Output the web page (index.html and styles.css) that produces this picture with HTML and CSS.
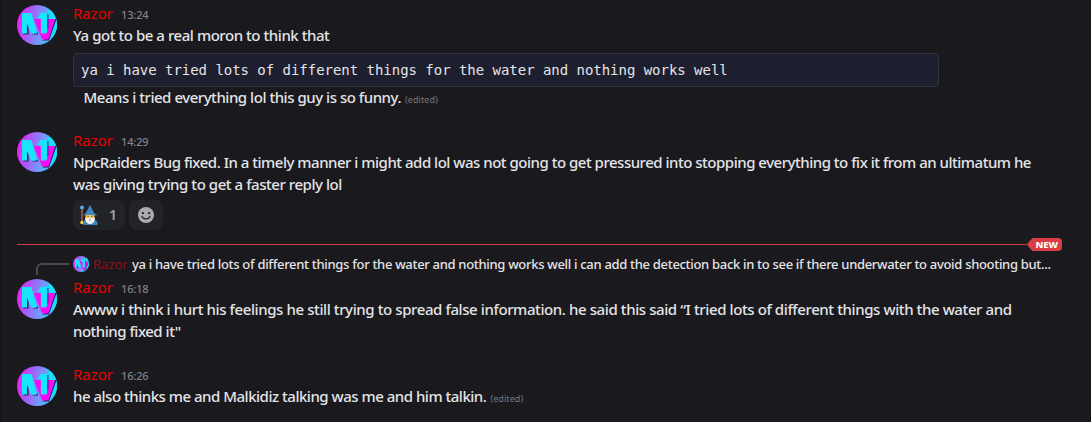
FILE: index.html
```
<!DOCTYPE html>
<html lang="en">
<head>
<meta charset="utf-8">
<title>Chat</title>
<link rel="stylesheet" href="styles.css">
</head>
<body>
<svg class="defs" width="0" height="0" aria-hidden="true">
  <defs>
    <linearGradient id="disc" x1="0" y1="0.4" x2="1" y2="0.6">
      <stop offset="0" stop-color="#f21cf4"/>
      <stop offset="0.3" stop-color="#a75cf6"/>
      <stop offset="0.6" stop-color="#7696fa"/>
      <stop offset="1" stop-color="#18e4fb"/>
    </linearGradient>
    <clipPath id="round"><circle cx="20" cy="20" r="20"/></clipPath>
    <symbol id="avatar" viewBox="0 0 40 40">
      <g clip-path="url(#round)">
        <rect width="40" height="40" fill="url(#disc)"/>
        <path d="M31 5H40V25L33 34Z" fill="#16dffa"/>
        <path d="M6 29.500h5.500v-9zM15 29.500h6v-2z" fill="#28275f"/>
        <path d="M25 35.500h7L39.500 14H38l-6 18z" fill="#34105e"/>
        <path d="M17 14h21l-6.500 20.500h-6.500z" fill="#fb08f5"/>
        <path d="M5 8h9.500l5.500 20.500h-6L10.200 19v9.500H5z" fill="#18e4fb"/>
        <path d="M19.500 12.500c1.800-.5 3-2 3.500-4.500h7.500v17l-1.200 3.500h-5.500V13.500z" fill="#18e4fb"/>
        <path d="M10.200 19v9.500h.8v-7.300zM30.500 9h.9v14l-.9 2.500z" fill="#28275f"/>
      </g>
    </symbol>
  </defs>
</svg>
<main class="chat">
  <article class="message">
    <svg class="avatar"><use href="#avatar"/></svg>
    <div class="body">
      <header class="head"><span class="name">Razor</span><time class="time">13:24</time></header>
      <p class="text roomy">Ya got to be a real moron to think that</p>
      <pre class="code">ya i have tried lots of different things for the water and nothing works well</pre>
      <p class="text indent">Means i tried everything lol this guy is so funny.<span class="edited">(edited)</span></p>
    </div>
  </article>

  <article class="message second">
    <svg class="avatar"><use href="#avatar"/></svg>
    <div class="body">
      <header class="head"><span class="name">Razor</span><time class="time">14:29</time></header>
      <p class="text">NpcRaiders Bug fixed. In a timely manner i might add lol was not going to get pressured into stopping everything to fix it from an ultimatum he<br><span class="roomy">was giving trying to get a faster reply lol</span></p>
      <div class="reactions">
        <div class="reaction">
          <svg class="wizard" viewBox="0 0 18 20">
            <path d="M2 4v15" stroke="#a9603f" stroke-width="1.6"/>
            <circle cx="2" cy="2.500" r="2" fill="#5dadec"/>
            <circle cx="2" cy="17.500" r="1.800" fill="#ffc84b"/>
            <path d="M3.500 20v-4l3-2h7l4 3v3z" fill="#3b88c3"/>
            <path d="M5.500 10h9v5h-9z" fill="#f7c851"/>
            <path d="M5 12.500l2 .8 3-.8 3 .8 2-.8c0 4-2 6.500-5 6.500s-5-2.500-5-6.500z" fill="#f1f1f1"/>
            <path d="M10 0L5.800 8 2.800 10.500c4-.7 10-.7 14.500 0L14.200 8z" fill="#3b88c3"/>
            <path d="M7.600 11.500h1M11.400 11.500h1" stroke="#664500" stroke-width="1"/>
            <path d="M9 14.800h2" stroke="#a66b35" stroke-width=".8"/>
          </svg>
          <span class="count">1</span>
        </div>
        <div class="reaction add">
          <svg class="smile" viewBox="0 0 16 16">
            <circle cx="8" cy="8" r="8" fill="#aaaab1"/>
            <circle cx="4.900" cy="6.200" r="1.150" fill="#222327"/>
            <circle cx="11.100" cy="6.200" r="1.150" fill="#222327"/>
            <path d="M4 9.400c.8 3.300 7.200 3.300 8 0" fill="none" stroke="#222327" stroke-width="1.300" stroke-linecap="round"/>
          </svg>
        </div>
      </div>
    </div>
  </article>

  <div class="divider">
    <span class="rule"></span>
    <svg class="tip" viewBox="0 0 6 13"><path d="M6 0H5.500L.6 5.500Q0 6.500.6 7.500L5.500 13H6z" fill="#da3e44"/></svg>
    <span class="new">NEW</span>
  </div>

  <div class="reply">
    <span class="spine"></span>
    <svg class="mini"><use href="#avatar"/></svg>
    <span class="reply-name">Razor</span>
    <span class="reply-text">ya i have tried lots of different things for the water and nothing works well i can add the detection back in to see if there underwater to avoid shooting but...</span>
  </div>

  <article class="message third">
    <svg class="avatar"><use href="#avatar"/></svg>
    <div class="body">
      <header class="head"><span class="name">Razor</span><time class="time">16:18</time></header>
      <p class="text"><span class="wide">Awww i think i hurt his feelings he still trying to spread false information. he said this said “I tried lots of different things with the water and</span><br>nothing fixed it"</p>
    </div>
  </article>

  <article class="message fourth">
    <svg class="avatar"><use href="#avatar"/></svg>
    <div class="body">
      <header class="head"><span class="name">Razor</span><time class="time">16:26</time></header>
      <p class="text">he also thinks me and Malkidiz talking was me and him talkin.<span class="edited">(edited)</span></p>
    </div>
  </article>
</main>
</body>
</html>
```
FILE: styles.css
```
* { box-sizing: border-box; }
body {
  margin: 0;
  background: #1a1a1e;
  color: #e4e4e7;
  font: 500 15px/22px "Noto Sans", sans-serif;
  overflow: hidden;
}
.defs { display: block; height: 0; }
.chat {
  height: 422px;
  padding: 3px 29px 0 16px;
  border-left: 1px solid #131316;
}
.message { display: flex; gap: 16px; }
.avatar { width: 40px; height: 40px; margin-top: 2px; flex: none; }
.body { flex: 1; min-width: 0; }
.head { display: flex; height: 21px; line-height: 21px; align-items: baseline; gap: 8px; }
.name { color: #e60000; font-size: 15px; font-weight: 400; width: 40px; white-space: nowrap; }
.time { color: #81828a; font-size: 11px; letter-spacing: -0.15px; white-space: nowrap; }
.text { margin: 0; white-space: nowrap; letter-spacing: -0.49px; }
.roomy { letter-spacing: -0.45px; }
.wide { letter-spacing: -0.405px; }
.indent { padding-left: 10.5px; margin-top: -1px; letter-spacing: -0.47px; }
.edited { margin-left: 4px; font-size: 9px; font-weight: 400; color: #75767e; letter-spacing: 0.08px; }
.code {
  width: 866px;
  height: 34px;
  margin: 7px 0 0;
  padding: 0 7px;
  border: 1px solid #30323e;
  border-radius: 4px;
  background: #1e1f2e;
  font: 14px/32px "DejaVu Sans Mono", monospace;
  letter-spacing: -0.03px;
}
.second { margin-top: 19px; }
.reactions { display: flex; gap: 4px; margin-top: 5px; }
.reaction {
  display: flex;
  align-items: center;
  gap: 11px;
  width: 52px;
  height: 30px;
  padding: 0 7px;
  border-radius: 8px;
  background: #222327;
}
.add { width: 34px; justify-content: center; padding: 0; }
.wizard { width: 18px; height: 20px; flex: none; }
.smile { width: 16px; height: 16px; }
.count { color: #a1a2a9; font-size: 14px; font-weight: 600; }
.divider { display: flex; align-items: center; height: 13px; margin-top: 8px; }
.rule { flex: 1; height: 1px; background: #d83a41; }
.tip { width: 6px; height: 13px; }
.new {
  width: 29px;
  height: 13px;
  border-radius: 0 4px 4px 0;
  background: #da3e44;
  color: #fff;
  font: 800 9.5px/13px "Noto Sans", sans-serif;
  padding-left: 2.5px;
}
.reply {
  display: flex;
  align-items: center;
  height: 18px;
  margin-top: 4px;
  font-size: 13px;
  white-space: nowrap;
}
.spine {
  width: 33px;
  height: 12px;
  margin: 8px 4px 0 19px;
  align-self: flex-start;
  border: 2px solid #4a4a50;
  border-width: 2px 0 0 2px;
  border-top-left-radius: 6px;
}
.mini { width: 16px; height: 16px; flex: none; }
.reply-name { width: 43px; padding-left: 4px; color: #8e0e12; font-weight: 400; flex: none; }
.reply-text { letter-spacing: -0.31px; }
.third { margin-top: 4px; }
.fourth { margin-top: 22px; }
```
